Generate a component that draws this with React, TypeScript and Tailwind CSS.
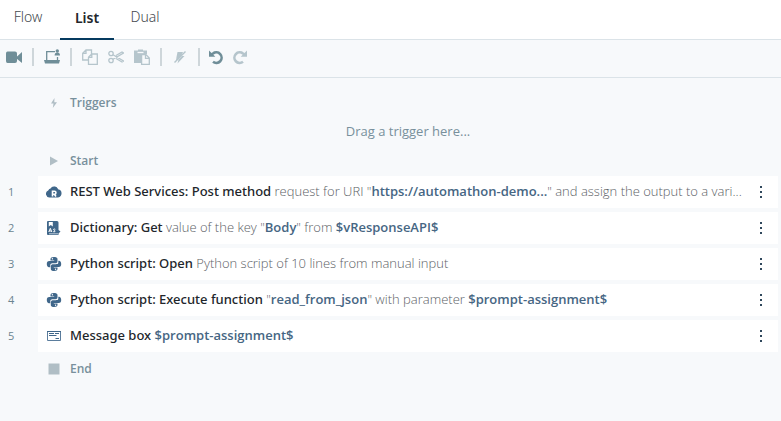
import type { ReactNode } from "react";

type Kind = "action" | "plain" | "value";
type Part = [Kind, string];

const partStyles: Record<Kind, string> = {
  action: "font-['Noto_Sans',sans-serif] font-medium text-[#22262b]",
  plain: "font-light text-[#5c6166]",
  value: "font-semibold text-[#466683]",
};

function CloudIcon() {
  return (
    <svg viewBox="0 0 16 16" className="size-4" fill="#40678a" aria-hidden="true">
      <path d="M4.600 13.500H4A3.600 3.600 0 0 1 2.200 6.600A3.200 3.200 0 0 1 5.800 4.500A3.400 3.400 0 0 1 12 5.200A4.200 4.200 0 0 1 12 13.500H4.600Z" />
      <circle cx="8" cy="6" r="3.600" />
      <path d="M6.500 12.500V7.300H8.500A1.400 1.400 0 0 1 8.500 10.200H6.700M8.400 10.200L10 12.500" fill="none" stroke="#fff" strokeWidth="1.600" />
    </svg>
  );
}

function DictionaryIcon() {
  return (
    <svg viewBox="0 0 16 16" className="size-4" aria-hidden="true">
      <path fill="#40678a" fillRule="evenodd" d="M2 1H11Q12.500 1 12.500 2.500V10L14.500 11.600L12.500 13.500V15H2Q1 15 1 14V2Q1 1 2 1ZM2.800 2V6.500L4.800 5L6.800 6.500V2Z" />
      <path d="M2.800 12L4.300 8.300L5.800 12M3.300 11H5.300M9.300 9.300Q8.500 8.800 7.700 9.200Q7.300 10 8.300 10.300Q9.500 10.800 8.900 11.600Q8 12.200 7.200 11.600" fill="none" stroke="#fff" strokeWidth="1" />
      <path d="M3 13.800H12" stroke="#dfe7ee" strokeWidth=".8" />
    </svg>
  );
}

function PythonIcon() {
  return (
    <svg viewBox="0 0 16 16" className="size-4" fill="#40678a" aria-hidden="true">
      <path fillRule="evenodd" d="M7.800 1C5.600 1 4.500 1.800 4.500 3V4.400H8.200V5H3.300C1.500 5 .8 6.200 .8 8S1.600 11.300 3 11.300H4.300V9.200C4.300 8 5.200 7.300 6.300 7.300H9.400C10.600 7.300 11.500 6.600 11.500 5.600V3C11.500 1.600 9.800 1 7.800 1ZM6.400 2.100A.7.700 0 1 1 6.400 3.500A.7.700 0 1 1 6.400 2.100Z" />
      <path fillRule="evenodd" d="M8.200 15C10.400 15 11.500 14.200 11.500 13V11.600H7.800V11H12.700C14.500 11 15.200 9.800 15.200 8S14.400 4.700 13 4.700H12.300V6.800C12.300 8 10.800 8.200 9.700 8.200H6.600C5.600 8.200 4.800 9.400 4.800 10.400V13C4.800 14.400 6.200 15 8.200 15ZM9.600 13.900A.7.700 0 1 1 9.600 12.500A.7.700 0 1 1 9.600 13.900Z" />
    </svg>
  );
}

function MessageIcon() {
  return (
    <svg viewBox="0 0 16 16" className="size-4" fill="none" stroke="#5b7d9d" aria-hidden="true">
      <path d="M1.500 3.500H14.500V12.500H1.500Z" />
      <path stroke="#40678a" d="M1 3.500H15M3 5.500H8M9 5.500H13M3 7.500H10.500M9.500 10.500H13" />
    </svg>
  );
}

const steps: { icon: ReactNode; parts: Part[] }[] = [
  {
    icon: <CloudIcon />,
    parts: [
      ["action", "REST Web Services: Post method"],
      ["plain", " request for URI \""],
      ["value", "https://automathon-demo..."],
      ["plain", "\" and assign the output to a vari..."],
    ],
  },
  {
    icon: <DictionaryIcon />,
    parts: [
      ["action", "Dictionary: Get"],
      ["plain", " value of the key \""],
      ["value", "Body"],
      ["plain", "\" from "],
      ["value", "$vResponseAPI$"],
    ],
  },
  {
    icon: <PythonIcon />,
    parts: [
      ["action", "Python script: Open"],
      ["plain", " Python script of 10 lines from manual input"],
    ],
  },
  {
    icon: <PythonIcon />,
    parts: [
      ["action", "Python script: Execute function"],
      ["plain", " \""],
      ["value", "read_from_json"],
      ["plain", "\" with parameter "],
      ["value", "$prompt-assignment$"],
    ],
  },
  {
    icon: <MessageIcon />,
    parts: [
      ["action", "Message box"],
      ["value", " $prompt-assignment$"],
    ],
  },
];

function Divider() {
  return <span className="h-[18px] w-0.5 shrink-0 bg-[#ced6da]" />;
}

function Tool({ label, muted, children }: { label: string; muted?: boolean; children: ReactNode }) {
  return (
    <button type="button" aria-label={label} className={`size-4 shrink-0 ${muted ? "text-[#b5c5cc]" : "text-[#6f8e98]"}`}>
      <svg viewBox="0 0 16 16" className="size-4" fill="none" stroke="currentColor" strokeWidth="1.300" aria-hidden="true">
        {children}
      </svg>
    </button>
  );
}

function Marker({ label, children }: { label: string; children: ReactNode }) {
  return (
    <div className="flex h-8 items-center gap-2 pt-0.5 pl-[46px] text-xs font-semibold text-[#78909c]">
      <svg viewBox="0 0 16 16" className="size-4" fill="#b0bec5" aria-hidden="true">
        {children}
      </svg>
      <h2>{label}</h2>
    </div>
  );
}

export default function App() {
  return (
    <div className="min-h-screen bg-[#f7f9fb] font-['Open_Sans',sans-serif]">
      <nav className="flex h-10 border-b border-[#dbe3e8] bg-white pl-[3px] font-['Noto_Sans',sans-serif] text-sm" role="tablist">
        <button type="button" role="tab" aria-selected="false" className="h-10 w-[50px] pb-1.5 font-light text-[#44494e]">Flow</button>
        <button type="button" role="tab" aria-selected="true" className="ml-[7px] h-10 w-[54px] border-b-2 border-[#053a5f] pb-0.5 font-semibold text-[#22262b]">List</button>
        <button type="button" role="tab" aria-selected="false" className="ml-1.5 h-10 w-[50px] pb-1.5 font-light text-[#44494e]">Dual</button>
      </nav>
      <div className="flex h-[38px] items-center border-b border-[#dbe3e8] px-1.5 pb-[3px]" role="toolbar">
        <Tool label="Record">
          <path fill="currentColor" stroke="none" d="M1.500 2.500H9Q11 2.500 11 4.500V12Q11 14 9 14H1.500Q0 14 0 12V4.500Q0 2.500 1.500 2.500ZM10.500 8L16 3V14L10.500 9.500Z" />
        </Tool>
        <div className="flex items-center gap-2.5 pl-2.5">
          <Divider />
          <Tool label="Device">
            <path d="M2.700 11V2.700H11M13.500 8V11" />
            <path fill="currentColor" stroke="none" d="M0 11H16L15 14.500H1ZM10.600 6.500Q10.600 3.500 13.300 3.500T16 6.500Z" />
            <circle cx="13.300" cy="2" r="1.700" fill="currentColor" stroke="none" />
          </Tool>
          <Divider />
        </div>
        <div className="flex items-center gap-2.5 pl-2.5">
          <Tool label="Copy" muted>
            <path d="M9.500 5V1H4L.7 4.300V11H6M4 1V4.300H.7M6.500 8.300L9.800 5H15.300V15.300H6.500ZM9.800 5V8.300H6.500" />
          </Tool>
          <Tool label="Cut" muted>
            <circle cx="3" cy="4.500" r="2.200" />
            <circle cx="3" cy="11.500" r="2.200" />
            <path d="M5 5.700L15.500 12L14 13L8 9.500M5 10.300L15.500 4L14 3L8 6.500" />
          </Tool>
          <Tool label="Paste" muted>
            <path fill="currentColor" stroke="none" d="M0 1.500H4V.5H9V1.500H13V5H7V14H0Z" />
            <path stroke="#f7f9fb" d="M3.500 3.500H9.500" />
            <path d="M7.600 5.600H12L15.300 9V15.300H7.600ZM11.500 5.600V9.300H15.300" />
          </Tool>
          <Divider />
          <Tool label="Disable" muted>
            <path fill="currentColor" stroke="none" d="M5.500 3H11L9.500 6.500L4 12L4.500 8ZM10 7H12.500L5.500 14.500L6.500 10.500Z" />
            <path strokeWidth="1.400" d="M2.500 13.500L13.500 2.500" />
          </Tool>
        </div>
        <div className="flex items-center gap-2 pl-2.5">
          <Divider />
          <Tool label="Undo">
            <path strokeWidth="2.600" d="M3.500 5.500L5 4.500A5.300 5.300 0 1 1 5 12.800" />
            <path fill="currentColor" stroke="none" d="M1 1.500V7.800H7.300Z" />
          </Tool>
          <Tool label="Redo" muted>
            <path strokeWidth="2.600" d="M12.500 5.500L11 4.500A5.300 5.300 0 1 0 11 12.800" />
            <path fill="currentColor" stroke="none" d="M15 1.500V7.800H8.700Z" />
          </Tool>
        </div>
      </div>
      <main className="pt-2 pr-[3px]">
        <Marker label="Triggers">
          <path d="M8.500 3L5 8.500H7.500L6.800 13L11 7.200H8.300Z" />
        </Marker>
        <p className="h-[26px] pl-[38px] text-center text-[13px] leading-[26px] text-[#78909c]">Drag a trigger here...</p>
        <Marker label="Start">
          <path d="M4 3.500V12.500L12 8Z" />
        </Marker>
        <ol className="flex flex-col gap-1">
          {steps.map((step, index) => (
            <li key={index} className="flex h-8 items-center">
              <span className="w-[38px] shrink-0 pl-2 text-[11px] text-[#6b8490]">{index + 1}</span>
              <div className="flex h-8 min-w-0 flex-1 items-center bg-white px-2">
                <span className="mr-2 shrink-0">{step.icon}</span>
                <p className="min-w-0 flex-1 truncate text-[13px]">
                  {step.parts.map(([kind, text], i) => (
                    <span key={i} className={partStyles[kind]}>{text}</span>
                  ))}
                </p>
                <button type="button" aria-label={`Options for step ${index + 1}`} className="flex h-5 w-[18px] shrink-0 flex-col items-center justify-center gap-[3px]">
                  <span className="size-0.5 bg-[#30485c]" />
                  <span className="size-0.5 bg-[#30485c]" />
                  <span className="size-0.5 bg-[#30485c]" />
                </button>
              </div>
            </li>
          ))}
        </ol>
        <Marker label="End">
          <path d="M2.500 2.500H13.500V13.500H2.500Z" />
        </Marker>
      </main>
    </div>
  );
}
